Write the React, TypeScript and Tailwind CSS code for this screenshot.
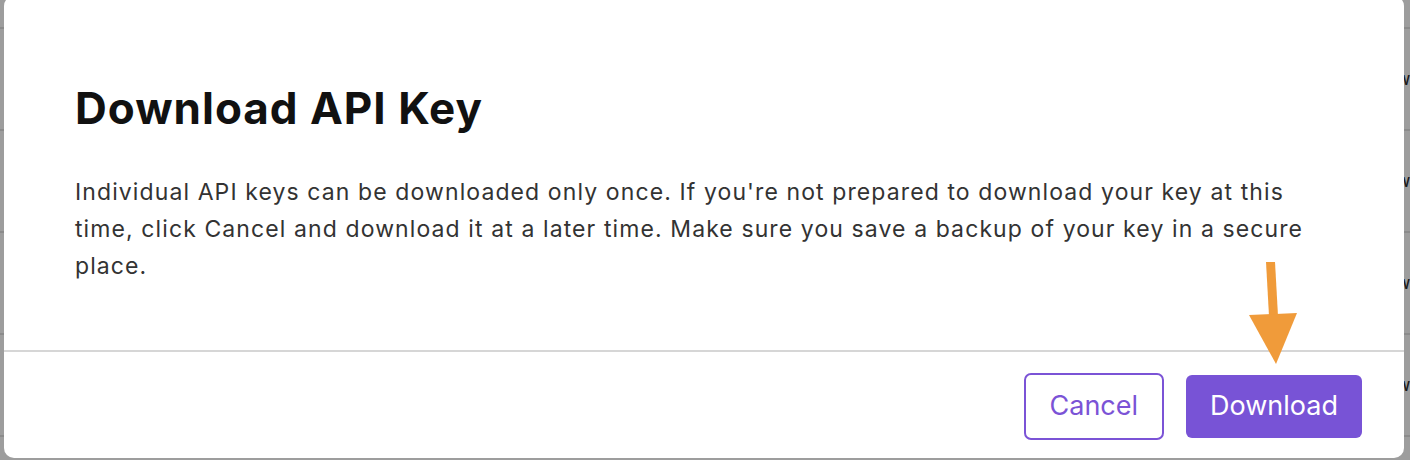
const ROWS = [0, 1, 2, 3]

function Backdrop() {
  return (
    <div className="w-full h-[460px] bg-[#9d9d9d] overflow-hidden">
      <div className="h-[29px] border-b-2 border-[#8b8b8b]" />
      {ROWS.map(i => (
        <div key={i} className="h-[102px] border-b-2 border-[#8b8b8b] flex items-center justify-end">
          <span className="text-[17px] font-semibold text-[#1a1a1a] leading-none inline-block scale-x-75 origin-right">v</span>
        </div>
      ))}
    </div>
  )
}

function Arrow() {
  return (
    <svg className="absolute left-[1240px] top-[262px]" width="60" height="110" viewBox="0 0 60 110">
      <polygon points="22,4 31,4 34,58 25,58" fill="#f09b3a" />
      <polygon points="5,57 53,55 32,106" fill="#f09b3a" />
    </svg>
  )
}

export default function App() {
  return (
    <div className="relative w-[1410px] h-[460px] overflow-hidden" style={{ fontFamily: 'Inter, "Noto Sans", sans-serif' }}>
      <Backdrop />

      {/* modal */}
      <div className="absolute left-[4px] top-[-4px] w-[1400px] h-[462px] bg-white rounded-[10px] flex flex-col">
        <div className="pl-[71px] pr-[80px] pt-[86px]">
          <h1 className="text-[44px] leading-[52px] font-bold text-[#111111] tracking-[1px]">Download API Key</h1>
          <p className="mt-[40px] max-w-[1235px] text-[23px] leading-[37px] tracking-[1.1px] text-[#333333]">
            Individual API keys can be downloaded only once. If you're not prepared to download your key at this
            time, click Cancel and download it at a later time. Make sure you save a backup of your key in a secure
            place.
          </p>
        </div>

        <div className="mt-auto border-t-2 border-[#d6d6d6] h-[108px] flex items-center justify-end gap-[22px] pr-[42px] pt-[2px]">
          <button className="h-[67px] px-[24px] border-2 border-[#7b53d6] rounded-[7px] text-[27px] text-[#7b53d6] bg-white">
            Cancel
          </button>
          <button className="h-[63px] px-[24px] rounded-[6px] bg-[#7853d6] text-[27px] text-white">
            Download
          </button>
        </div>

        <Arrow />
      </div>
    </div>
  )
}
